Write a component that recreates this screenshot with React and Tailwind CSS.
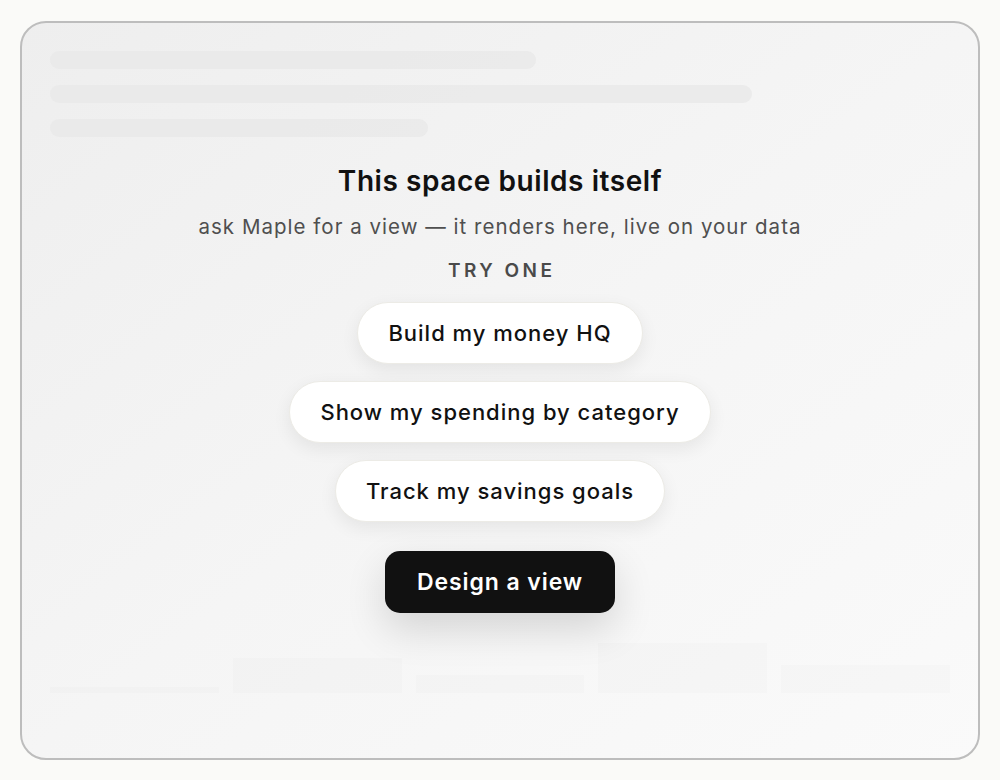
const skeletonBars = ["w-[486px]", "w-[702px]", "w-[378px]"];

const prompts = [
  "Build my money HQ",
  "Show my spending by category",
  "Track my savings goals",
];

// faint ghost chart at the bottom of the canvas
const ghostCols = ["h-[6px]", "h-[35px]", "h-[18px]", "h-[50px]", "h-[28px]"];

export default function App() {
  return (
    <div
      className="min-h-[780px] bg-[#fafaf8] pt-[21px] px-[20px] pb-[20px]"
      style={{ fontFamily: "Inter, 'Noto Sans', sans-serif" }}
    >
      <div className="h-[739px] rounded-[26px] border-2 border-[#bdbdbd] bg-linear-to-br from-[#eeeeee] via-[#f5f5f5] to-[#fafafa] px-[28px] pt-[28px] flex flex-col">
        {/* Skeleton lines */}
        <div className="flex flex-col gap-[16px]">
          {skeletonBars.map((w) => (
            <div key={w} className={`${w} h-[18px] rounded-full bg-[#e8e8e8]/80`}></div>
          ))}
        </div>

        {/* Empty state */}
        <div className="flex flex-col items-center mt-[27px]">
          <h1 className="text-[28px] leading-[34px] font-semibold text-[#111] tracking-[0.02em]">
            This space builds itself
          </h1>
          <p className="mt-[15px] text-[20.5px] leading-[28px] text-[#4f4f4f] tracking-[0.05em]">
            ask Maple for a view — it renders here, live on your data
          </p>
          <div className="mt-[18px] text-[19px] leading-[24px] font-semibold tracking-[0.18em] text-[#4a4a4a] pl-[0.18em]">
            TRY ONE
          </div>

          <div className="mt-[19px] flex flex-col items-center gap-[17px]">
            {prompts.map((p) => (
              <button
                key={p}
                className="h-[62px] px-[30px] rounded-full bg-white border border-[#ecebe6] shadow-[0_6px_18px_rgba(0,0,0,0.07)] text-[22px] font-medium text-[#111] tracking-[0.045em]"
              >
                {p}
              </button>
            ))}
          </div>

          <button className="mt-[29px] h-[62px] px-[32px] rounded-[15px] bg-[#111] text-white text-[23px] font-semibold tracking-[0.04em] shadow-[0_16px_40px_rgba(0,0,0,0.14)]">
            Design a view
          </button>
        </div>

        {/* Ghost chart */}
        <div className="mt-[30px] grid grid-cols-5 gap-[14px] items-end h-[50px] w-[900px]">
          {ghostCols.map((h, i) => (
            <div key={i} className={`${h} bg-black/[0.012]`}></div>
          ))}
        </div>
      </div>
    </div>
  );
}
